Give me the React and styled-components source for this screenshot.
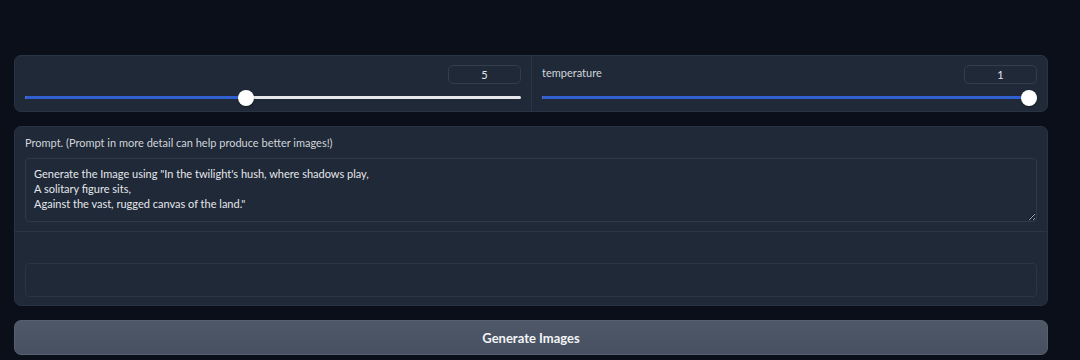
import React from 'react';
import styled, { createGlobalStyle } from 'styled-components';

const GlobalStyle = createGlobalStyle`
  html, body {
    margin: 0;
    background: #0b0f19;
    color-scheme: dark;
  }
  body {
    font-family: Lato, "Noto Sans", sans-serif;
  }
`;

const Page = styled.div`
  width: 1080px;
  height: 360px;
  box-sizing: border-box;
  padding: 55px 32px 0 14px;
  display: flex;
  flex-direction: column;
  background: #0b0f19;
  overflow: hidden;
`;

const Panel = styled.div`
  background: #1f2937;
  border: 1px solid #283344;
  border-radius: 7px;
  box-sizing: border-box;
  margin-bottom: ${p => p.$gap || 0}px;
`;

const SliderRow = styled(Panel)`
  display: grid;
  grid-template-columns: 1fr 1fr;
  height: 57px;
`;

const SliderCell = styled.div`
  display: flex;
  flex-direction: column;
  padding: 9px 10px 0 10px;
  & + & {
    border-left: 1px solid #2b3545;
  }
`;

const SliderHead = styled.div`
  display: flex;
  align-items: flex-start;
  justify-content: space-between;
  height: 20px;
`;

const Label = styled.span`
  font-size: 11px;
  line-height: 14px;
  margin-top: 1px;
  color: #d1d5db;
`;

const NumberBox = styled.div`
  width: 73px;
  height: 19px;
  box-sizing: border-box;
  border: 1px solid #323d4e;
  border-radius: 5px;
  display: flex;
  align-items: center;
  justify-content: center;
  font-size: 11px;
  color: #e5e7eb;
`;

const Track = styled.div`
  position: relative;
  height: 3px;
  margin-top: 11px;
  background: #e5e7eb;
  border-radius: 2px;
`;

const Fill = styled.div`
  height: 100%;
  background: #2f5fd0;
  border-radius: 2px;
`;

const Thumb = styled.div`
  position: absolute;
  top: 50%;
  width: 16px;
  height: 16px;
  margin: -8px 0 0 -8px;
  border-radius: 50%;
  background: #ffffff;
  box-shadow: 0 1px 2px rgba(0, 0, 0, 0.35);
`;

const Slider = ({ label, value, min, max }) => {
  const ratio = (value - min) / (max - min);
  const pos = `calc(8px + (100% - 16px) * ${ratio})`;
  return (
    <SliderCell>
      <SliderHead>
        <Label>{label}</Label>
        <NumberBox>{value}</NumberBox>
      </SliderHead>
      <Track>
        <Fill style={{ width: pos }} />
        <Thumb style={{ left: pos }} />
      </Track>
    </SliderCell>
  );
};

const PromptPanel = styled(Panel)`
  height: 180px;
  display: flex;
  flex-direction: column;
  overflow: hidden;
`;

const Block = styled.div`
  padding: ${p => p.$pad};
  border-bottom: ${p => (p.$last ? 'none' : '1px solid #2b3545')};
  display: flex;
  flex-direction: column;
  flex: ${p => (p.$grow ? 1 : 'none')};
`;

const BlockLabel = styled.div`
  font-size: 11px;
  color: #d1d5db;
  height: 16px;
  line-height: 16px;
  margin-bottom: 7px;
`;

const TextArea = styled.textarea`
  display: block;
  width: 100%;
  height: 64px;
  box-sizing: border-box;
  margin: 0;
  padding: 7px 8px;
  resize: vertical;
  background: #1f2937;
  border: 1px solid #2e394a;
  border-radius: 4px;
  color: #e5e7eb;
  font-family: Lato, "Noto Sans", sans-serif;
  font-size: 11px;
  line-height: 15px;
  outline: none;
`;

const EmptyInput = styled.div`
  height: 34px;
  box-sizing: border-box;
  border: 1px solid #2b3545;
  border-radius: 4px;
  margin-top: auto;
`;

const Button = styled.button`
  height: 35px;
  width: 100%;
  border: 1px solid #566070;
  border-radius: 7px;
  background: linear-gradient(180deg, #4e5867 0%, #465061 100%);
  color: #f3f4f6;
  font-family: Lato, "Noto Sans", sans-serif;
  font-size: 13px;
  font-weight: 700;
  cursor: pointer;
`;

const prompt = `Generate the Image using "In the twilight's hush, where shadows play,
A solitary figure sits,
Against the vast, rugged canvas of the land."`;

export default function App() {
  return (
    <>
      <GlobalStyle />
      <Page>
        <SliderRow $gap={14}>
          <Slider label="" value={5} min={1} max={10} />
          <Slider label="temperature" value={1} min={0} max={1} />
        </SliderRow>
        <PromptPanel $gap={14}>
          <Block $pad="8px 10px 9px 10px">
            <BlockLabel>Prompt. (Prompt in more detail can help produce better images!)</BlockLabel>
            <TextArea defaultValue={prompt} />
          </Block>
          <Block $pad="0 10px 8px 10px" $grow $last>
            <EmptyInput />
          </Block>
        </PromptPanel>
        <Button>Generate Images</Button>
      </Page>
    </>
  );
}
